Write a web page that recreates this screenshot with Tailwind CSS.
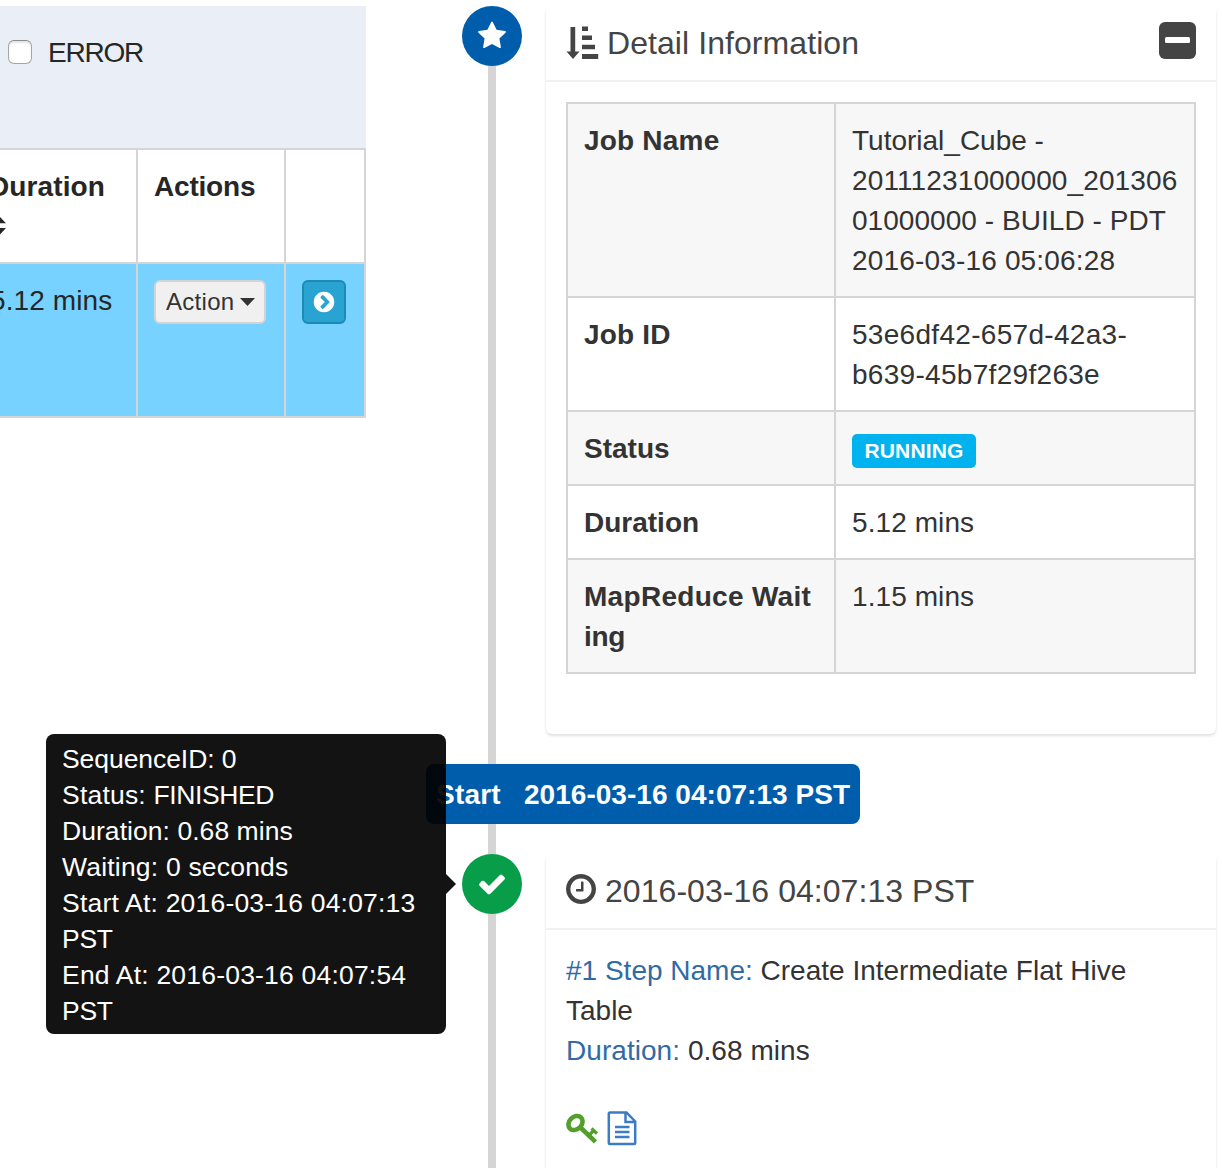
<!DOCTYPE html>
<html lang="en">
<head>
<meta charset="utf-8">
<title>Job Monitor</title>
<script src="https://cdn.jsdelivr.net/npm/@tailwindcss/browser@4"></script>
</head>
<body class="bg-white">
<div class="relative flex h-[1168px] w-[1222px] overflow-hidden bg-white font-['Liberation_Sans',Arial,sans-serif] text-[28px] leading-10 text-[#333]">

  <!-- Jobs list -->
  <section class="w-[366px] shrink-0 overflow-hidden pt-1.5 text-[#262626]">
    <div class="flex h-[142px] items-start gap-4 bg-[#eaeef7] pl-2 pt-[27px]">
      <span class="mt-[7px] h-6 w-6 rounded-md border border-[#a6a6a6] border-t-[#8c8c8c] bg-white shadow-[inset_0_2px_2px_#e4e4e4]"></span>
      <span class="tracking-[-1.200px]">ERROR</span>
    </div>
    <table class="-ml-7 w-[394px] table-fixed border-separate border-spacing-0 border-t-2 border-[#d5d5d5] text-left">
      <colgroup><col class="w-[166px]"><col class="w-[148px]"><col class="w-[80px]"></colgroup>
      <tr class="h-[114px] align-top">
        <th class="border-r-2 border-b-2 border-[#d5d5d5] pt-[17px] pb-[15px] pl-[17px] tracking-[0.120px]">Duration
          <svg class="mt-[9px] block h-5 w-[18px] overflow-visible" viewBox="0 0 18 20" fill="#262626"><path d="M9-1l8 8.200H1zM9 20.500l8-8.500H1z"/></svg>
        </th>
        <th class="border-r-2 border-b-2 border-[#d5d5d5] pt-[17px] pl-4 tracking-[-0.200px]">Actions</th>
        <th class="border-r-2 border-b-2 border-[#d5d5d5]"></th>
      </tr>
      <tr class="h-[154px] bg-[#77d2ff] align-top">
        <td class="border-r-2 border-b-2 border-[#d5d5d5] pt-[17px] pl-[18px] tracking-[0.100px]">5.12 mins</td>
        <td class="border-r-2 border-b-2 border-[#d5d5d5] p-4">
          <div class="flex h-11 w-28 items-center gap-[6px] rounded-md border-2 border-[#d3d3d3] bg-[#f0f0f0] pl-[10px] text-2xl leading-9 text-[#333]">
            <span class="w-[68px] tracking-[0.300px]">Action</span>
            <svg class="h-2 w-[15px]" viewBox="0 0 15 8" fill="#333"><path d="M0 0h15L7.500 8z"/></svg>
          </div>
        </td>
        <td class="border-r-2 border-b-2 border-[#d5d5d5] p-4">
          <div class="flex h-11 w-11 items-center justify-center rounded-md border-2 border-[#1b8bb5] bg-[#29a3d2]">
            <svg class="-mt-px h-6 w-6" viewBox="0 0 1792 1792" fill="#fff"><path d="M845 1395l454-454q19-19 19-45t-19-45l-454-454q-19-19-45-19t-45 19l-102 102q-19 19-19 45t19 45l307 307-307 307q-19 19-19 45t19 45l102 102q19 19 45 19t45-19zm819-499q0 209-103 385.500t-279.500 279.500-385.500 103-385.500-103-279.500-279.500-103-385.500 103-385.500 279.500-279.500 385.500-103 385.500 103 279.500 279.500 103 385.500z"/></svg>
          </div>
        </td>
      </tr>
    </table>
  </section>

  <!-- Timeline -->
  <section class="relative ml-[60px] w-[790px] shrink-0">
    <div class="absolute left-[62px] top-9 h-[1132px] w-2 bg-[#d5d5d5]"></div>

    <div class="relative flex pl-9 pt-1.5">
      <div class="flex h-[60px] w-[60px] shrink-0 items-center justify-center rounded-full bg-[#005dac]">
        <svg class="h-[30px] w-[30px]" viewBox="0 0 1792 1792" fill="#fff"><path d="M1728 647q0 22-26 48l-363 354 86 500q1 7 1 20 0 21-10.500 35.500t-30.500 14.500q-19 0-40-12l-449-236-449 236q-22 12-40 12-21 0-31.500-14.500t-10.500-35.500q0-6 2-20l86-500-364-354q-25-27-25-48 0-37 56-46l502-73 225-455q19-41 49-41t49 41l225 455 502 73q56 9 56 46z"/></svg>
      </div>
      <article class="ml-6 h-[728px] w-[670px] rounded-md bg-white shadow-[0_2px_3px_rgba(0,0,0,0.12)]">
        <header class="flex h-[76px] items-center border-b-2 border-[#f1f1f1] px-5 text-[32px] text-[#444]">
          <svg class="h-[34px] w-[33px]" viewBox="0 0 33 34" fill="#444"><path d="M4.500 1h4.700v24.500h4.300L7 33 .5 25.500h4zM16 .5h6v4.500h-6zM16 9.500h10v4.500h-10zM16 18.800h13v4.500h-13zM16 28h16.200v5h-16.200z"/></svg>
          <span class="ml-2 tracking-[0.070px]">Detail Information</span>
          <span class="-mt-1.5 ml-auto flex h-[37px] w-[37px] items-center justify-center rounded-md bg-[#444]"><span class="h-[6.500px] w-[25px] rounded-[1.500px] bg-white"></span></span>
        </header>
        <div class="p-5">
          <table class="w-full table-fixed border-separate border-spacing-0 border-t-2 border-l-2 border-[#d5d5d5] text-left align-top">
            <colgroup><col class="w-[268px]"><col class="w-[360px]"></colgroup>
            <tr class="bg-[#f7f7f7] align-top">
              <th class="border-r-2 border-b-2 border-[#d5d5d5] px-4 pt-[17px] pb-[15px] tracking-[0.200px]">Job Name</th>
              <td class="whitespace-nowrap border-r-2 border-b-2 border-[#d5d5d5] px-4 pt-[17px] pb-[15px]">Tutorial_Cube -<br><span class="tracking-[0.120px]">20111231000000_201306</span><br><span class="tracking-[0.050px]">01000000 - BUILD - PDT</span><br><span class="tracking-[0.170px]">2016-03-16 05:06:28</span></td>
            </tr>
            <tr class="align-top">
              <th class="border-r-2 border-b-2 border-[#d5d5d5] px-4 pt-[17px] pb-[15px] tracking-[0.200px]">Job ID</th>
              <td class="border-r-2 border-b-2 border-[#d5d5d5] px-4 pt-[17px] pb-[15px] tracking-[0.300px]">53e6df42-657d-42a3-<br>b639-45b7f29f263e</td>
            </tr>
            <tr class="bg-[#f7f7f7] align-top">
              <th class="border-r-2 border-b-2 border-[#d5d5d5] px-4 pt-[17px] pb-[15px]">Status</th>
              <td class="border-r-2 border-b-2 border-[#d5d5d5] px-4">
                <span class="mt-[22px] flex h-[34px] w-[124px] items-center justify-center rounded-[5px] bg-[#00b3ee] pb-0.5 text-[21px] font-bold leading-none tracking-[0.150px] text-white">RUNNING</span>
              </td>
            </tr>
            <tr class="align-top">
              <th class="border-r-2 border-b-2 border-[#d5d5d5] px-4 pt-[17px] pb-[15px]">Duration</th>
              <td class="border-r-2 border-b-2 border-[#d5d5d5] px-4 pt-[17px] pb-[15px] tracking-[0.080px]">5.12 mins</td>
            </tr>
            <tr class="bg-[#f7f7f7] align-top">
              <th class="whitespace-nowrap border-r-2 border-b-2 border-[#d5d5d5] px-4 pt-[17px] pb-[15px]"><span class="tracking-[0.300px]">MapReduce Wait</span><br><span class="tracking-[-0.300px]">ing</span></th>
              <td class="border-r-2 border-b-2 border-[#d5d5d5] px-4 pt-[17px] pb-[15px] tracking-[0.080px]">1.15 mins</td>
            </tr>
          </table>
        </div>
      </article>
    </div>

    <div class="relative mt-[30px] flex h-[60px] w-[434px] items-center whitespace-nowrap rounded-lg bg-[#005dac] pl-[10px] pt-0.5 font-bold text-white">
      <span class="w-[88px] tracking-[0.200px]">Start</span><span class="tracking-[0.030px]">2016-03-16 04:07:13 PST</span>
    </div>

    <div class="relative mt-[30px] flex pl-9">
      <div class="flex h-[60px] w-[60px] shrink-0 items-center justify-center rounded-full bg-[#079d49]">
        <svg class="h-[30px] w-[30px]" viewBox="0 0 1792 1792" fill="#fff"><path d="M1671 566q0 40-28 68l-724 724-136 136q-28 28-68 28t-68-28l-136-136-362-362q-28-28-28-68t28-68l136-136q28-28 68-28t68 28l294 295 656-657q28-28 68-28t68 28l136 136q28 28 28 68z"/></svg>
      </div>
      <article class="ml-6 h-[340px] w-[670px] rounded-md bg-white shadow-[0_2px_3px_rgba(0,0,0,0.12)]">
        <header class="flex h-[76px] items-center border-b-2 border-[#f1f1f1] px-5 text-[32px] text-[#444]">
          <svg class="-mt-1 h-[30px] w-[30px]" viewBox="128 128 1536 1536" fill="#444"><path d="M1024 544v448q0 14-9 23t-23 9h-320q-14 0-23-9t-9-23v-64q0-14 9-23t23-9h224v-352q0-14 9-23t23-9h64q14 0 23 9t9 23zm416 352q0-148-73-273t-198-198-273-73-273 73-198 198-73 273 73 273 198 198 273 73 273-73 198-198 73-273zm224 0q0 209-103 385.500t-279.500 279.500-385.500 103-385.500-103-279.500-279.500-103-385.500 103-385.500 279.500-279.500 385.500-103 385.500 103 279.500 279.500 103 385.500z"/></svg>
          <span class="ml-[9px] tracking-[0.050px]">2016-03-16 04:07:13 PST</span>
        </header>
        <div class="px-5 pt-[21px]">
          <div><span class="text-[#316ba5]">#1 Step Name:</span> Create Intermediate Flat Hive<br>Table</div>
          <div class="tracking-[0.050px]"><span class="text-[#316ba5]">Duration:</span> 0.68 mins</div>
          <div class="mt-[39px] flex items-center gap-[9px]">
            <svg class="h-8 w-8" viewBox="0 0 32 32" fill="none" stroke="#52a02c"><ellipse cx="9.500" cy="11" rx="7.800" ry="6.200" transform="rotate(-45 9.500 11)" stroke-width="4.600"/><path d="M14 15l15.500 14.800" stroke-width="4.600"/><path d="M22 24l6-5.500M25.500 16.500l5.500 5" stroke-width="3.200"/></svg>
            <svg class="h-9 w-[30px]" viewBox="0 0 30 36" fill="none" stroke="#3a7cc5" stroke-width="2.500"><path d="M2.800 2.500h16.700l8.700 9v21.500a1 1 0 0 1-1 1H2.800a1 1 0 0 1-1-1V3.500a1 1 0 0 1 1-1zM18.500 2.500v9.500h9.500M8 17h14.500M8 22h14.500M8 27h14.500"/></svg>
          </div>
        </div>
      </article>
    </div>
  </section>

  <!-- Step tooltip -->
  <div class="absolute left-[46px] top-[734px] h-[300px] w-[400px] whitespace-nowrap rounded-lg bg-black/[.925] px-4 pt-[7px] text-[26.500px] leading-9 tracking-[0.200px] text-white">
    <span class="tracking-[-0.060px]">SequenceID: 0</span><br>Status: <span class="tracking-[-0.400px]">FINISHED</span><br><span class="tracking-[0.050px]">Duration: 0.68 mins</span><br>Waiting: 0 seconds<br>Start At: 2016-03-16 04:07:13<br><span class="tracking-[-0.300px]">PST</span><br>End At: 2016-03-16 04:07:54<br><span class="tracking-[-0.300px]">PST</span>
    <svg class="absolute left-full top-[140px] h-5 w-[10px]" viewBox="0 0 10 20" fill="#131313"><path d="M0 0l10 10L0 20z"/></svg>
  </div>
</div>
</body>
</html>
